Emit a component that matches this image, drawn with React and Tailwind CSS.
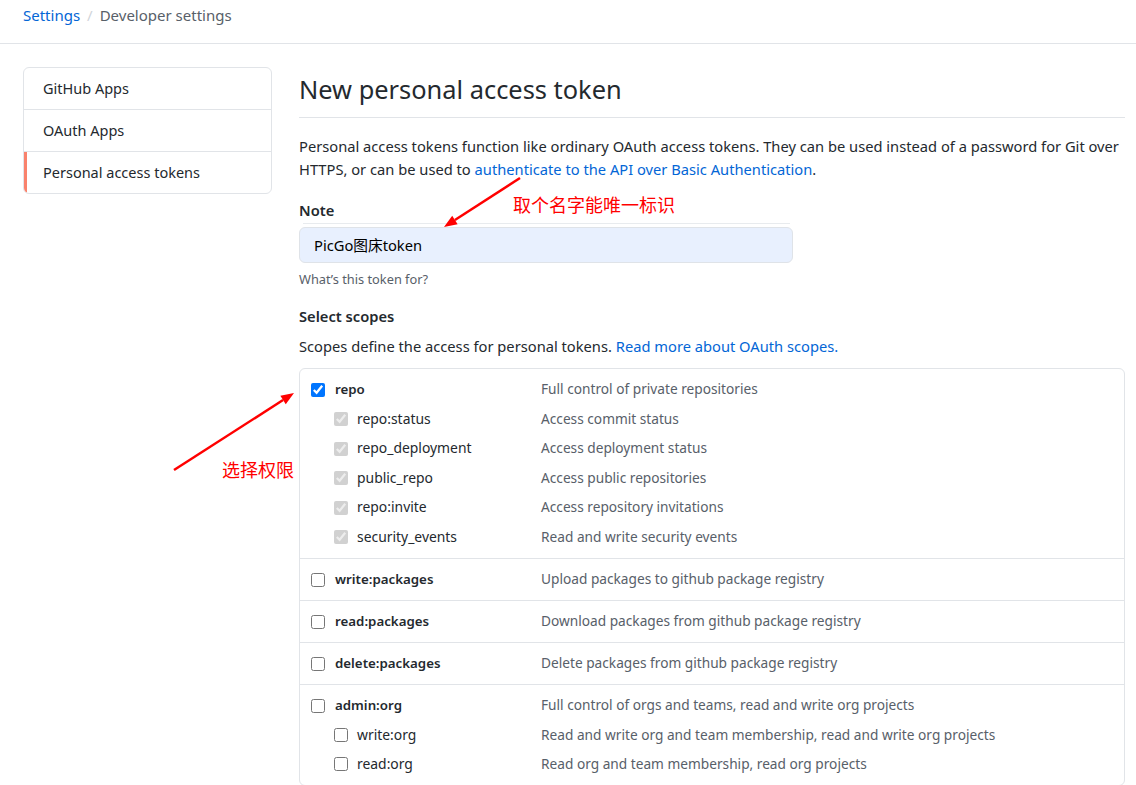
import React from 'react';

const FONT = { fontFamily: '"Noto Sans", "Noto Sans CJK SC", sans-serif' };
const CJK = { fontFamily: '"Noto Sans CJK SC", sans-serif' };

const scopeGroups = [
  {
    name: 'repo',
    desc: 'Full control of private repositories',
    checked: true,
    children: [
      ['repo:status', 'Access commit status'],
      ['repo_deployment', 'Access deployment status'],
      ['public_repo', 'Access public repositories'],
      ['repo:invite', 'Access repository invitations'],
      ['security_events', 'Read and write security events'],
    ],
  },
  { name: 'write:packages', desc: 'Upload packages to github package registry', children: [] },
  { name: 'read:packages', desc: 'Download packages from github package registry', children: [] },
  { name: 'delete:packages', desc: 'Delete packages from github package registry', children: [] },
  {
    name: 'admin:org',
    desc: 'Full control of orgs and teams, read and write org projects',
    children: [
      ['write:org', 'Read and write org and team membership, read and write org projects'],
      ['read:org', 'Read org and team membership, read org projects'],
    ],
  },
];

const ScopeRow = ({ label, desc, sub, checked, disabled }) => (
  <div className="flex items-center h-[29.5px]">
    <div className={`flex items-center w-[241px] shrink-0 ${sub ? 'pl-[34px]' : 'pl-[11px]'}`}>
      <input
        type="checkbox"
        defaultChecked={checked}
        disabled={disabled}
        className="m-0 w-[14px] h-[14px] shrink-0"
      />
      <span className={sub ? 'ml-[9px] text-[13.9px] text-[#24292e]' : 'ml-[10px] text-[13.3px] font-semibold text-[#24292e]'}>
        {label}
      </span>
    </div>
    <span className="text-[13.7px] text-[#586069]">{desc}</span>
  </div>
);

const Arrow = ({ x1, y1, x2, y2 }) => {
  const a = Math.atan2(y2 - y1, x2 - x1);
  const len = 13;
  const w = 5;
  const bx = x2 - len * Math.cos(a);
  const by = y2 - len * Math.sin(a);
  const p1 = `${bx + w * Math.sin(a)},${by - w * Math.cos(a)}`;
  const p2 = `${bx - w * Math.sin(a)},${by + w * Math.cos(a)}`;
  return (
    <g>
      <line x1={x1} y1={y1} x2={bx} y2={by} stroke="#ff0000" strokeWidth="2.5" />
      <polygon points={`${x2},${y2} ${p1} ${p2}`} fill="#ff0000" />
    </g>
  );
};

export default function App() {
  return (
    <div className="relative w-[1136px] h-[785px] overflow-hidden bg-white text-[14.7px] text-[#24292e]" style={FONT}>
      {/* breadcrumb */}
      <div className="h-[44px] border-b border-[#e1e4e8] px-[23px] pt-[2px] text-[15px] leading-[26px] flex">
        <span className="text-[#0366d6]">Settings</span>
        <span className="mx-[7px] text-[#d1d5da]">/</span>
        <span className="text-[#586069]">Developer settings</span>
      </div>

      <div className="flex pl-[23px] pt-[23px]">
        {/* sidebar */}
        <div className="w-[249px] shrink-0 self-start border border-[#e1e4e8] rounded-md overflow-hidden text-[14.5px]">
          <div className="h-[42px] flex items-center pl-[19px] border-b border-[#e1e4e8]">GitHub Apps</div>
          <div className="h-[42px] flex items-center pl-[19px] border-b border-[#e1e4e8]">OAuth Apps</div>
          <div className="h-[41px] flex items-center pl-[16px] border-l-[3px] border-[#f9826c]">Personal access tokens</div>
        </div>

        {/* main */}
        <div className="ml-[27px] w-[826px] shrink-0">
          <div className="h-[51px] pt-[5px] border-b border-[#e1e4e8]">
            <h2 className="text-[25.4px] leading-[34px] font-normal">New personal access token</h2>
          </div>

          <p className="mt-[17px] leading-[23px]">
            Personal access tokens function like ordinary OAuth access tokens. They can be used instead of a password for Git over HTTPS, or can be used to{' '}
            <span className="text-[#0366d6]">authenticate to the API over Basic Authentication</span>.
          </p>

          <div className="mt-[18px] font-semibold leading-[23px]">Note</div>
          <div className="mt-[1px] ml-[4px] w-[487px] border-t border-[#e8ebee]" />
          <div className="mt-[3px] w-[494px] h-[36px] rounded-md border border-[#dfe3e8] bg-[#e8f0fe] flex items-center pl-[14px] text-black" style={FONT}>
            PicGo图床token
          </div>
          <div className="mt-[6px] text-[12.8px] leading-[20px] text-[#586069]">What’s this token for?</div>

          <div className="mt-[16px] font-semibold leading-[23px]">Select scopes</div>
          <div className="mt-[7px] leading-[23px]">
            Scopes define the access for personal tokens.{' '}
            <span className="text-[#0366d6]">Read more about OAuth scopes.</span>
          </div>

          <div className="mt-[10px] border border-[#e1e4e8] rounded-md">
            {scopeGroups.map((g, i) => (
              <div key={g.name} className={i > 0 ? 'py-[5.75px] border-t border-[#e1e4e8]' : 'py-[6px]'}>
                <ScopeRow label={g.name} desc={g.desc} checked={g.checked} />
                {g.children.map(([l, d]) => (
                  <ScopeRow key={l} label={l} desc={d} sub checked={g.checked} disabled={g.checked} />
                ))}
              </div>
            ))}
          </div>
        </div>
      </div>

      {/* annotations */}
      <svg className="absolute left-0 top-0 pointer-events-none" width="1136" height="785">
        <Arrow x1={520} y1={178} x2={444} y2={227} />
        <Arrow x1={174} y1={470} x2={294} y2={393} />
      </svg>
      <span className="absolute left-[513px] top-[192px] text-[18px] leading-[24px] text-[#ff0000]" style={CJK}>取个名字能唯一标识</span>
      <span className="absolute left-[222px] top-[457px] text-[18px] leading-[24px] text-[#ff0000]" style={CJK}>选择权限</span>
    </div>
  );
}
